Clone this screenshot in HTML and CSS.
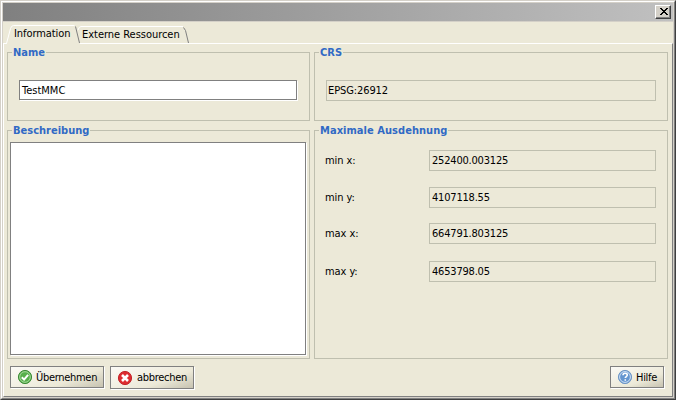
FILE: index.html
```html
<!DOCTYPE html>
<html lang="de">
<head>
<meta charset="utf-8">
<title>Information</title>
<link rel="stylesheet" href="styles.css">
</head>
<body>
<div class="window">
  <div class="frame">
    <header class="titlebar">
      <button class="close" aria-label="Schließen"><svg width="8" height="7" viewBox="0 0 8 7" shape-rendering="crispEdges"><path d="M0 0h2v1h1v1h2v-1h1v-1h2v1h-1v1h-1v1h-1v1h1v1h1v1h1v1h-2v-1h-1v-1h-2v1h-1v1h-2v-1h1v-1h1v-1h1v-1h-1v-1h-1v-1h-1z"/></svg></button>
    </header>
    <nav class="tabs">
      <svg class="tab-lines" width="200" height="22" viewBox="0 0 200 22" fill="none">
        <path class="surface" d="M3.500 22l4.500-17l2-1h62l5 18z"/>
        <path class="light" d="M0 21.500h3.500l4-15q1-3 3-3h61"/>
        <path class="dark" d="M72.500 4.500l4 16.500"/>
        <path class="light" d="M75 8q1-3.500 3-3.500h102"/>
        <path class="dark" d="M180.500 5.500l2 3l3 12.500"/>
      </svg>
      <span class="tab tab-info">Information</span>
      <span class="tab tab-ext">Externe Ressourcen</span>
    </nav>
    <main class="page">
      <div class="grid">
        <fieldset class="group name"><legend>Name</legend><div class="input">TestMMC</div></fieldset>
        <fieldset class="group crs"><legend>CRS</legend><div class="value">EPSG:26912</div></fieldset>
        <fieldset class="group desc"><legend>Beschreibung</legend><div class="area"></div></fieldset>
        <fieldset class="group extent"><legend class="wide">Maximale Ausdehnung</legend>
          <div class="row"><label>min x:</label><div class="value">252400.003125</div></div>
          <div class="row"><label>min y:</label><div class="value">4107118.55</div></div>
          <div class="row third"><label>max x:</label><div class="value">664791.803125</div></div>
          <div class="row fourth"><label>max y:</label><div class="value">4653798.05</div></div>
        </fieldset>
      </div>
      <footer class="actions">
        <button class="btn apply"><svg width="16" height="16" viewBox="0 0 16 16"><circle cx="8" cy="8" r="6.600" fill="#58b04c" stroke="#3d8b37"/><circle cx="8" cy="8" r="5.300" fill="none" stroke="#a5d89c"/><path d="M4.800 8.200l2.300 2.400l4-4.700" fill="none" stroke="#fff" stroke-width="2"/></svg><span>Übernehmen</span></button>
        <button class="btn cancel"><svg width="16" height="16" viewBox="0 0 16 16"><circle cx="8" cy="8" r="6.600" fill="#dd2c30" stroke="#c3262b"/><path d="M5 5l6 6m0-6l-6 6" stroke="#fff" stroke-width="2.600"/></svg><span>abbrechen</span></button>
        <button class="btn help"><svg width="16" height="16" viewBox="0 0 16 16"><circle cx="8" cy="8" r="6.600" fill="#6596d0" stroke="#6f97c6"/><circle cx="8" cy="8" r="5.400" fill="none" stroke="#d3e3f5"/><path d="M6 6.300c0-2.600 4.300-2.600 4.300-.2c0 1.500-2 1.500-2 3M8.300 10.200v1.500" fill="none" stroke="#fff" stroke-width="1.600"/></svg><span>Hilfe</span></button>
      </footer>
    </main>
  </div>
</div>
</body>
</html>
```
FILE: styles.css
```css
* { box-sizing: border-box; }
body { margin: 0; width: 676px; height: 400px; overflow: hidden; font: 11px/14px "DejaVu Sans Condensed", "DejaVu Sans", sans-serif; letter-spacing: -0.08px; color: #000; }
.window { height: 400px; border: 1px solid; border-color: #d4d0c8 #404040 #404040 #d4d0c8; background: #d4d0c8; }
.frame { height: 398px; border: 1px solid; border-color: #fff #808080 #808080 #fff; padding: 1px; display: flex; flex-direction: column; }
.titlebar { height: 18px; flex: none; background: linear-gradient(90deg, #808080, #c0c0c0); display: flex; justify-content: flex-end; padding: 2px 2px 0 0; }
.close { width: 16px; height: 14px; padding: 0 0 1px 1px; display: flex; align-items: center; justify-content: center; background: #d4d0c8; border: 1px solid; border-color: #fff #404040 #404040 #fff; box-shadow: inset -1px -1px #808080; }
.tabs { height: 21px; flex: none; margin-top: 1px; background: #ece9d8; position: relative; z-index: 1; display: flex; }
.tab-lines { position: absolute; left: 0; top: 0; }
.surface { fill: #ece9d8; }
.light { stroke: #fff; }
.dark { stroke: #808080; }
.tab { position: relative; white-space: nowrap; }
.tab-info { margin: 5px 0 0 11px; width: 68px; }
.tab-ext { margin-top: 6px; letter-spacing: -0.03px; }
.page { flex: 1; background: #ece9d8; border: 1px solid; border-color: #fff #808080 #808080 #fff; display: flex; flex-direction: column; padding: 8px 4px 5px 3px; }
.grid { display: grid; grid-template-columns: 303px 354px; grid-template-rows: 69px 229px; gap: 9px 4px; height: 307px; }
.group { margin: 0; padding: 0; min-width: 0; border: 1px solid #bfbfaf; position: relative; }
legend { position: absolute; left: 4px; top: -7px; padding: 0 1px; line-height: 14px; background: #ece9d8; color: #316ac5; font-weight: bold; letter-spacing: 0; white-space: nowrap; }
.wide { letter-spacing: 0.05px; }
.input { margin: 27px 12px 0 11px; height: 20px; background: #fff; border: 1px solid #808080; box-shadow: 1px 1px #fff; padding: 3px 2px; letter-spacing: 0; }
.value { height: 21px; border: 1px solid #bfbfaf; padding: 3px 2px; letter-spacing: -0.2px; }
.crs .value { margin: 27px 11px 0; padding-left: 1px; letter-spacing: -0.1px; }
.area { margin: 11px 3px 0 2px; height: 213px; background: #fff; border: 1px solid #808080; box-shadow: 1px 1px #fff; }
.row { display: grid; grid-template-columns: 104px 227px; padding-left: 10px; height: 21px; margin-top: 16px; align-items: center; }
.row:nth-of-type(1) { margin-top: 19px; }
.third { margin-top: 15px; }
.fourth { margin-top: 17px; }
.actions { display: flex; align-items: flex-start; padding: 7px 4px 0 3px; }
.btn { height: 22px; font: inherit; letter-spacing: -0.3px; color: #000; border: 1px solid #808080; border-radius: 0; box-shadow: 1px 1px #fff; background: linear-gradient(160deg, #fbfaf6, #ece9d8 65%, #c6c2b0); display: flex; align-items: center; gap: 3px; padding: 0 0 0 6px; white-space: nowrap; }
.btn svg { flex: none; }
.apply { width: 94px; }
.cancel { width: 84px; margin-left: 6px; height: 23px; gap: 4px; }
.help { width: 54px; margin-left: auto; }
.apply span, .help span { padding-top: 2px; }
```
